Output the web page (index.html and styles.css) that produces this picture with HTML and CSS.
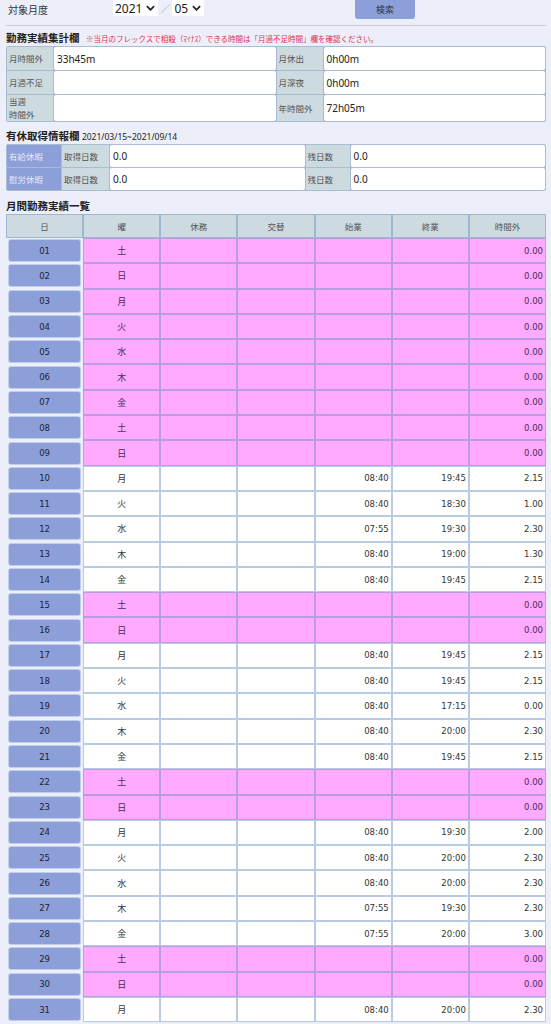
FILE: index.html
```html
<!DOCTYPE html>
<html lang="ja">

<head>
    <meta charset="UTF-8">
    <meta name="viewport" content="width=device-width, initial-scale=1.0">
    <title>勤務実績</title>
    <link rel="stylesheet" href="styles.css">
</head>

<body>
    <main class="page">
        <div class="search">
            <span class="search-label">対象月度</span>
            <div class="month">
                <span class="select">2021 <svg viewBox="0 0 10 6"><path d="M1 1l4 4 4-4"/></svg></span>
                <span class="slash">／</span>
                <span class="select">05 <svg viewBox="0 0 10 6"><path d="M1 1l4 4 4-4"/></svg></span>
            </div>
            <button class="search-button">検索</button>
        </div>

        <h2 class="section-title">勤務実績集計欄 <span class="note">※当月のフレックスで相殺（ﾏｲﾅｽ）できる時間は「月過不足時間」欄を確認ください。</span></h2>
        <table class="summary">
            <tr>
                <th>月時間外</th>
                <td>33h45m</td>
                <th>月休出</th>
                <td>0h00m</td>
            </tr>
            <tr>
                <th>月過不足</th>
                <td></td>
                <th>月深夜</th>
                <td>0h00m</td>
            </tr>
            <tr class="tall">
                <th>当週<br>時間外</th>
                <td></td>
                <th>年時間外</th>
                <td>72h05m</td>
            </tr>
        </table>

        <h2 class="section-title leave-title">有休取得情報欄 <span class="period">2021/03/15~2021/09/14</span></h2>
        <table class="leave">
            <tr>
                <th class="kind">有給休暇</th>
                <th>取得日数</th>
                <td>0.0</td>
                <th>残日数</th>
                <td>0.0</td>
            </tr>
            <tr>
                <th class="kind">慰労休暇</th>
                <th>取得日数</th>
                <td>0.0</td>
                <th>残日数</th>
                <td>0.0</td>
            </tr>
        </table>

        <h2 class="section-title days-title">月間勤務実績一覧</h2>
        <table class="days">
            <thead>
                <tr>
                    <th>日</th>
                    <th>曜</th>
                    <th>休務</th>
                    <th>交替</th>
                    <th>始業</th>
                    <th>終業</th>
                    <th>時間外</th>
                </tr>
            </thead>
            <tbody class="day-rows"></tbody>
        </table>
    </main>
    <script src="app.js"></script>
</body>

</html>
```

FILE: app.js
```js
var rows = [
    ["01", "土", "", "", "0.00", 1],
    ["02", "日", "", "", "0.00", 1],
    ["03", "月", "", "", "0.00", 1],
    ["04", "火", "", "", "0.00", 1],
    ["05", "水", "", "", "0.00", 1],
    ["06", "木", "", "", "0.00", 1],
    ["07", "金", "", "", "0.00", 1],
    ["08", "土", "", "", "0.00", 1],
    ["09", "日", "", "", "0.00", 1],
    ["10", "月", "08:40", "19:45", "2.15", 0],
    ["11", "火", "08:40", "18:30", "1.00", 0],
    ["12", "水", "07:55", "19:30", "2.30", 0],
    ["13", "木", "08:40", "19:00", "1.30", 0],
    ["14", "金", "08:40", "19:45", "2.15", 0],
    ["15", "土", "", "", "0.00", 1],
    ["16", "日", "", "", "0.00", 1],
    ["17", "月", "08:40", "19:45", "2.15", 0],
    ["18", "火", "08:40", "19:45", "2.15", 0],
    ["19", "水", "08:40", "17:15", "0.00", 0],
    ["20", "木", "08:40", "20:00", "2.30", 0],
    ["21", "金", "08:40", "19:45", "2.15", 0],
    ["22", "土", "", "", "0.00", 1],
    ["23", "日", "", "", "0.00", 1],
    ["24", "月", "08:40", "19:30", "2.00", 0],
    ["25", "火", "08:40", "20:00", "2.30", 0],
    ["26", "水", "08:40", "20:00", "2.30", 0],
    ["27", "木", "07:55", "19:30", "2.30", 0],
    ["28", "金", "07:55", "20:00", "3.00", 0],
    ["29", "土", "", "", "0.00", 1],
    ["30", "日", "", "", "0.00", 1],
    ["31", "月", "08:40", "20:00", "2.30", 0]
];

var body = document.querySelector(".day-rows");
var html = "";
rows.forEach(function (r) {
    html += '<tr class="' + (r[5] ? "off" : "") + '">' +
        '<td class="day"><span class="day-button">' + r[0] + '</span></td>' +
        '<td class="weekday">' + r[1] + '</td>' +
        '<td></td><td></td>' +
        '<td class="num">' + r[2] + '</td>' +
        '<td class="num">' + r[3] + '</td>' +
        '<td class="num">' + r[4] + '</td>' +
        '</tr>';
});
body.innerHTML = html;
```

FILE: styles.css
```css
* {
    box-sizing: border-box;
}

html,
body {
    margin: 0;
    font-family: "Noto Sans", "Noto Sans CJK JP", sans-serif;
    font-size: 11px;
    background-color: var(--background-color);
    color: var(--text-color);
}

:root {
    --text-color: #333;
    --background-color: #eceffa;
    --label-color: #cddae0;
    --accent-color: #8d9fd8;
    --line-color: #a9bdd2;
    --holiday-color: #ffa9ff;
}

.page {
    padding: 0 5px 0 6px;
}

.search {
    display: flex;
    align-items: flex-start;
    height: 26px;
    border-bottom: 1px solid #c9ccd6;
}

.search-label {
    width: 107px;
    padding: 2px 0 0 2px;
    font-size: 10px;
    font-family: "Noto Sans CJK JP", sans-serif;
}

.month {
    width: 242px;
    display: flex;
    align-items: center;
    height: 16px;
}

.month .select {
    display: inline-flex;
    align-items: center;
    gap: 4px;
    background: #fff;
    height: 16px;
    padding: 0 3px 0 2px;
    font-size: 12px;
    color: #222;
}

.month .select svg {
    width: 9px;
    height: 6px;
    fill: none;
    stroke: #222;
    stroke-width: 2;
}

.month .slash {
    color: #999;
    font-size: 10px;
    margin: 0 2px;
}

.search-button {
    width: 60px;
    height: 19px;
    border: none;
    border-radius: 0 0 3px 3px;
    background-color: var(--accent-color);
    color: #333;
    font-size: 9px;
    font-family: "Noto Sans CJK JP", sans-serif;
    padding: 0;
}

.section-title {
    font-family: "Noto Sans CJK JP", sans-serif;
    font-size: 10.5px;
    font-weight: bold;
    margin: 0;
    padding: 6px 0 0;
    line-height: 12px;
    color: #222;
}

.section-title.leave-title {
    padding-top: 8px;
}

.section-title.days-title {
    padding-top: 9px;
}

.section-title .note {
    font-size: 7.5px;
    font-weight: normal;
    color: #e0304a;
    margin-left: 4px;
}

.section-title .period {
    font-size: 8.5px;
    font-weight: normal;
    font-family: "Noto Sans", sans-serif;
}

.summary,
.leave {
    width: 100%;
    border-collapse: separate;
    border-spacing: 1px;
    background-color: var(--line-color);
    border-radius: 2px;
    margin-top: 1px;
}

.summary th,
.leave th {
    background-color: var(--label-color);
    font-weight: normal;
    text-align: left;
    font-size: 8.5px;
    color: #555;
    font-family: "Noto Sans CJK JP", sans-serif;
    padding: 0 2px;
    line-height: 13px;
}

.summary td,
.leave td {
    background-color: #fff;
    border-radius: 2px;
    padding: 0 3px;
    font-size: 10px;
    color: #222;
}

.summary th {
    width: 46px;
}

.summary tr {
    height: 23px;
}

.summary tr.tall {
    height: 26px;
}

.leave tr {
    height: 22px;
}

.leave th {
    width: 47px;
}

.leave th.kind {
    width: 54px;
    background-color: var(--accent-color);
    color: #e6eafa;
}

.leave th:nth-child(4) {
    width: 44px;
}

.days {
    width: 100%;
    table-layout: fixed;
    border-collapse: separate;
    border-spacing: 0;
    margin-top: 2px;
}

.days th {
    height: 24px;
    background-color: var(--label-color);
    border: 1px solid rgba(100, 140, 190, 0.45);
    font-weight: normal;
    font-size: 8.5px;
    color: #555;
    font-family: "Noto Sans CJK JP", sans-serif;
}

.days td {
    height: 25.3px;
    padding: 0 2px;
    background-color: #fff;
    border: 1px solid rgba(100, 140, 190, 0.45);
    font-family: "DejaVu Sans", sans-serif;
    font-size: 8.5px;
    color: #333;
}

.days tr.off td {
    background-color: var(--holiday-color);
    color: #4a2d5a;
}

.days td.day,
.days tr.off td.day {
    background-color: transparent;
    border: none;
    padding: 1px 2px;
}

.days .day-button {
    display: flex;
    align-items: center;
    justify-content: center;
    height: 23px;
    border-radius: 3px;
    background-color: var(--accent-color);
    border: 1px solid #c2cfea;
    color: #223;
}

.days td.weekday {
    text-align: center;
    font-family: "Noto Sans CJK JP", sans-serif;
    font-size: 9px;
}

.days td.num {
    text-align: right;
}
```
